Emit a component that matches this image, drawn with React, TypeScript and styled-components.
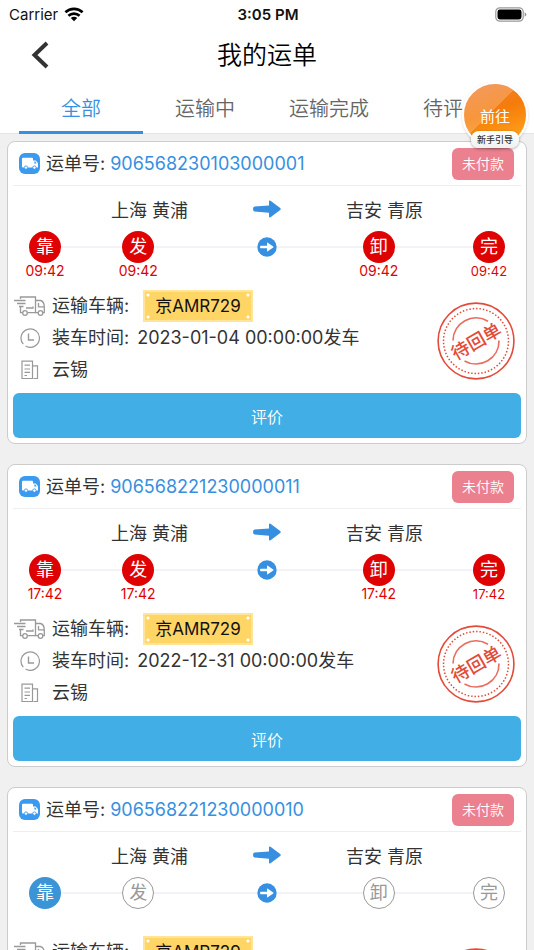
import React, { useState } from "react";
import styled, { createGlobalStyle, css } from "styled-components";

const GlobalStyle = createGlobalStyle`
  * { box-sizing: border-box; }
  body {
    margin: 0;
    background: #f0f0f0;
    color: #333;
    font-family: Inter, "Noto Sans CJK SC", sans-serif;
    font-size: 18px;
    font-weight: 400;
  }
  button { font: inherit; border: 0; margin: 0; padding: 0; background: none; cursor: pointer; }
  h1, h2, p, dl, dd, dt, ol { margin: 0; padding: 0; font-weight: inherit; }
  svg { display: block; flex: none; }
`;

const BLUE = "#368fe0";
const RED = "#df0202";

const Screen = styled.div`
  display: flex;
  flex-direction: column;
  height: 100vh;
  position: relative;
  overflow: hidden;
`;

const StatusBar = styled.div`
  display: grid;
  grid-template-columns: 1fr auto 1fr;
  align-items: center;
  height: 28px;
  padding: 0 7px 0 9px;
  background: #fff;
  color: #111;
  font-size: 15px;
`;

const Carrier = styled.span`
  display: flex;
  align-items: center;
  gap: 6px;
`;

const Clock = styled.span`
  font-weight: 600;
`;

const Battery = styled.span`
  justify-self: end;
`;

const TitleBar = styled.header`
  display: grid;
  grid-template-columns: 48px 1fr 48px;
  align-items: center;
  height: 54px;
  padding: 0 16px;
  background: #fff;
  color: #000;
`;

const BackButton = styled.button`
  display: flex;
  justify-content: center;
  align-items: center;
  height: 44px;
`;

const Title = styled.h1`
  font-size: 25px;
  font-weight: 350;
  line-height: 36px;
  text-align: center;
`;

const Tabs = styled.nav`
  display: flex;
  flex: none;
  height: 52px;
  padding-left: 19px;
  overflow: hidden;
  background: #fff;
  box-shadow: inset 0 -1px #e4e4e4;
`;

const Tab = styled.button<{ $active: boolean }>`
  flex: none;
  width: 124px;
  padding-top: 4px;
  border-bottom: 3px solid ${(p) => (p.$active ? BLUE : "transparent")};
  color: ${(p) => (p.$active ? BLUE : "#666")};
  font-size: 20px;
  font-weight: 350;
  line-height: 28px;
`;

const OrderList = styled.main`
  display: flex;
  flex: 1;
  flex-direction: column;
  gap: 20px;
  min-height: 0;
  padding: 7px;
  overflow-y: auto;
  scrollbar-width: none;
`;

const Card = styled.article`
  flex: none;
  padding: 0 5px 5px;
  border: 1px solid #ccc;
  border-radius: 8px;
  background: #fff;
`;

const CardHeader = styled.div`
  display: flex;
  align-items: center;
  height: 44px;
  padding: 0 7px 0 6px;
  border-bottom: 1px solid #eee;
`;

const OrderNumber = styled.h2`
  display: flex;
  flex: 1;
  gap: 5px;
  margin-left: 6px;
  font-size: 18px;
  line-height: 26px;
`;

const OrderLink = styled.a`
  color: ${BLUE};
  text-decoration: none;
`;

const PayBadge = styled.span`
  padding: 0 10px;
  border-radius: 6px;
  background: #eb808f;
  color: #fff;
  font-size: 14px;
  font-weight: 350;
  line-height: 32px;
`;

const Route = styled.div`
  display: grid;
  grid-template-columns: 1fr auto 1fr;
  align-items: center;
  height: 45px;
  padding: 0 33px;
  text-align: center;
`;

const Timeline = styled.div`
  display: flex;
  align-items: flex-start;
  height: 59px;
  padding: 0 16px;
`;

type StepState = "done" | "current" | "todo";

const Step = styled.div`
  display: flex;
  flex: none;
  flex-direction: column;
  align-items: center;
  width: 32px;
`;

const StepDot = styled.span<{ $state: StepState }>`
  display: flex;
  justify-content: center;
  align-items: center;
  width: 32px;
  height: 32px;
  border-radius: 50%;
  color: #fff;
  font-size: 18px;
  line-height: 26px;
  ${(p) => p.$state === "done" && css`background: ${RED};`}
  ${(p) => p.$state === "current" && css`background: #3b94d5;`}
  ${(p) => p.$state === "todo" && css`border: 1px solid #999; color: #999;`}
`;

const StepTime = styled.time<{ $small?: boolean }>`
  color: ${RED};
  font-size: ${(p) => (p.$small ? 13 : 14)}px;
  line-height: 16px;
`;

const Connector = styled.span<{ $grow: number }>`
  flex: ${(p) => p.$grow} 1 0;
  height: 2px;
  margin-top: 15px;
  background: #f3f3f7;
`;

const Midpoint = styled.span`
  flex: none;
  margin-top: 6px;
`;

const Details = styled.div`
  display: flex;
  align-items: flex-start;
  justify-content: space-between;
  padding-right: 6px;
`;

const InfoList = styled.dl`
  display: flex;
  flex-direction: column;
`;

const InfoRow = styled.div`
  display: flex;
  align-items: center;
  height: 32px;
`;

const InfoIcon = styled.dt`
  display: flex;
  justify-content: center;
  width: 33px;
  margin-right: 6px;
`;

const InfoText = styled.dd`
  display: flex;
  align-items: center;
  gap: 8px;
  line-height: 26px;
`;

const Plate = styled.span`
  margin-left: 6px;
  padding: 0 10px;
  border: 2px solid #ffe49a;
  background:
    radial-gradient(circle at 3px 3px, #fff 1px, transparent 2px),
    radial-gradient(circle at calc(100% - 3px) 3px, #fff 1px, transparent 2px),
    radial-gradient(circle at 3px calc(100% - 3px), #fff 1px, transparent 2px),
    radial-gradient(circle at calc(100% - 3px) calc(100% - 3px), #fff 1px, transparent 2px),
    #ffd666;
  color: #111;
  font-size: 17px;
  line-height: 28px;
`;

const StampSlot = styled.div`
  padding-top: 12px;
`;

const ReviewButton = styled.button`
  display: block;
  width: 100%;
  height: 45px;
  margin-top: 7px;
  border-radius: 6px;
  background: #41afe5;
  color: #fff;
  font-size: 16px;
  font-weight: 350;
`;

const GuideButton = styled.button`
  position: absolute;
  top: 82px;
  right: 6px;
  display: flex;
  flex-direction: column;
  align-items: center;
  width: 66px;
  height: 66px;
`;

const GuideDisc = styled.span`
  width: 66px;
  height: 66px;
  flex: none;
  border: 2px solid #fff;
  border-radius: 50%;
  background:
    linear-gradient(135deg, rgba(255, 255, 255, 0.2) 45%, transparent 45%),
    linear-gradient(160deg, #f08030 10%, #f57c0a 45%, #ffa41c 90%);
  box-shadow: 0 1px 3px rgba(0, 0, 0, 0.15);
  color: #fff;
  font-size: 15px;
  line-height: 65px;
`;

const GuideLabel = styled.span`
  flex: none;
  margin-top: -17px;
  padding: 0 6px;
  border-radius: 8px;
  background: linear-gradient(#fff, #f0f0f0);
  box-shadow: 0 1px 3px rgba(0, 0, 0, 0.35);
  color: #333;
  font-size: 9px;
  font-weight: 500;
  line-height: 17px;
  white-space: nowrap;
  z-index: 1;
`;

const WifiIcon = () => (
  <svg width="20" height="15" viewBox="0 0 20 15" fill="none" stroke="#000" strokeWidth="2.6">
    <path d="M1.4 5.3a12.4 12.4 0 0 1 17.2 0M4.4 8.8a8.2 8.2 0 0 1 11.2 0" />
    <path d="M10 14.2 6.8 11a4.6 4.6 0 0 1 6.4 0Z" fill="#000" stroke="none" />
  </svg>
);

const BatteryIcon = () => (
  <svg width="32" height="15" viewBox="0 0 32 15">
    <rect x="0.8" y="0.8" width="27.4" height="13.4" rx="4" fill="none" stroke="#999" strokeWidth="1.2" />
    <rect x="2.5" y="2.5" width="24" height="10" rx="2.4" fill="#000" />
    <path d="M29.6 5.2q1.8.7 1.8 2.3t-1.8 2.3Z" fill="#999" />
  </svg>
);

const BackIcon = () => (
  <svg width="18" height="28" viewBox="0 0 18 28" fill="none" stroke="#333" strokeWidth="4">
    <path d="M16 2 3.5 14 16 26" />
  </svg>
);

const TruckBadge = () => (
  <svg width="21" height="21" viewBox="0 0 21 21">
    <rect width="21" height="21" rx="6" fill="#3a9af0" />
    <rect x="3" y="4.8" width="11" height="9.8" rx="1" fill="#fff" />
    <path d="M13.8 7.400h3L19 10.200V14.600h-5.200Z" fill="#fff" />
    <path d="M15.400 8.600h1l1.200 1.900h-2.200Z" fill="#3a9af0" />
    <circle cx="7" cy="14.6" r="1.7" fill="#fff" stroke="#3a9af0" strokeWidth="0.900" />
    <circle cx="15.4" cy="14.6" r="1.7" fill="#fff" stroke="#3a9af0" strokeWidth="0.900" />
  </svg>
);

const RouteArrow = () => (
  <svg width="28" height="18" viewBox="0 0 28 18" fill={BLUE}>
    <path d="M1.500 6.600 16 5.500V1.500Q16 0 17.500.700L27.200 8Q28.300 9 27.200 10L17.500 17.300Q16 18 16 16.500V12.700L1.500 11.600Q0 11.400 0 9.100T1.500 6.600Z" />
  </svg>
);

const CircleArrow = () => (
  <svg width="20" height="20" viewBox="0 0 20 20">
    <circle cx="10" cy="10" r="9.7" fill={BLUE} />
    <path d="M3.800 8.700H10V6.200q0-1 .8-.5l5.400 3.700q.8.600 0 1.200l-5.400 3.700q-.8.500-.8-.5v-2.500H3.800q-.7 0-.7-.7V9.400q0-.7.7-.7Z" fill="#fff" />
  </svg>
);

const TruckIcon = () => (
  <svg width="32" height="20" viewBox="0 0 32 20" fill="none" stroke="#999" strokeWidth="1.300">
    <path d="M6.500 3V1H21.500V16.700H13.500M6.500 11V16.700H8.500M0 4.500H11.500M3 7.500H11.500M5 10.500H9.500" />
    <path d="M21.500 4.500H26.500Q30.300 5.500 30.300 11V16.700H29M24 16.700H21.500M24.500 7V10.800H30M19 10.500V12H12" />
    <circle cx="11" cy="17" r="2.300" />
    <circle cx="26.500" cy="17" r="2.300" />
  </svg>
);

const ClockIcon = () => (
  <svg width="20" height="20" viewBox="0 0 20 20" fill="none" stroke="#999" strokeWidth="1.200">
    <path d="M3.300 16.200A9.200 9.200 0 1 1 5.600 18.100" />
    <path d="M8.500 5.500V12H14" strokeWidth="1.400" />
  </svg>
);

const CompanyIcon = () => (
  <svg width="18" height="20" viewBox="0 0 18 20" fill="none" stroke="#999" strokeWidth="1.200">
    <path d="M1 1.200H11.500V18.500H1ZM11.500 5.800H16.500V18.500H12.500M3.500 5.200H9M3.500 9H9M3.500 12.300H9M3.500 15.500H6" />
  </svg>
);

const StampText = styled.text`
  font-family: "Noto Sans CJK SC", sans-serif;
  font-size: 18px;
  font-weight: 500;
  fill: #e34a38;
  text-anchor: middle;
`;

const Stamp = () => (
  <svg width="78" height="78" viewBox="0 0 78 78" fill="none" stroke="#e34a38" role="img" aria-label="待回单">
    <circle cx="39" cy="39" r="37.900" strokeWidth="1.600" />
    <circle cx="39" cy="39" r="32.500" strokeWidth="1.500" strokeDasharray="1.500 1.900" />
    <path d="M16 38.500A23 23 0 0 1 51 19.300M62 38.500A23 23 0 0 1 27.500 58.900" strokeWidth="1.700" opacity="0.8" />
    <StampText x="39" y="46" stroke="none" transform="rotate(-30 39 39)">待回单</StampText>
  </svg>
);

interface Order {
  number: string;
  time?: string;
  departure: string;
}

const ORDERS: Order[] = [
  { number: "906568230103000001", time: "09:42", departure: "2023-01-04 00:00:00发车" },
  { number: "906568221230000011", time: "17:42", departure: "2022-12-31 00:00:00发车" },
  { number: "906568221230000010", departure: "2022-12-31 00:00:00发车" },
];

const TABS = ["全部", "运输中", "运输完成", "待评价"];

interface TimelineStepProps {
  label: string;
  state: StepState;
  time?: string;
  small?: boolean;
}

function TimelineStep({ label, state, time, small }: TimelineStepProps) {
  return (
    <Step>
      <StepDot $state={state}>{label}</StepDot>
      {time && <StepTime $small={small}>{time}</StepTime>}
    </Step>
  );
}

function OrderCard({ order }: { order: Order }) {
  const rest: StepState = order.time ? "done" : "todo";
  return (
    <Card>
      <CardHeader>
        <TruckBadge />
        <OrderNumber>
          <span>运单号:</span>
          <OrderLink href={"#" + order.number}>{order.number}</OrderLink>
        </OrderNumber>
        <PayBadge>未付款</PayBadge>
      </CardHeader>
      <Route>
        <span>上海 黄浦</span>
        <RouteArrow />
        <span>吉安 青原</span>
      </Route>
      <Timeline>
        <TimelineStep label="靠" state={order.time ? "done" : "current"} time={order.time} />
        <Connector $grow={61} />
        <TimelineStep label="发" state={rest} time={order.time} />
        <Connector $grow={102} />
        <Midpoint><CircleArrow /></Midpoint>
        <Connector $grow={86} />
        <TimelineStep label="卸" state={rest} time={order.time} />
        <Connector $grow={78} />
        <TimelineStep label="完" state={rest} time={order.time} small />
      </Timeline>
      <Details>
        <InfoList>
          <InfoRow>
            <InfoIcon><TruckIcon /></InfoIcon>
            <InfoText><span>运输车辆:</span><Plate>京AMR729</Plate></InfoText>
          </InfoRow>
          <InfoRow>
            <InfoIcon><ClockIcon /></InfoIcon>
            <InfoText><span>装车时间:</span><span>{order.departure}</span></InfoText>
          </InfoRow>
          <InfoRow>
            <InfoIcon><CompanyIcon /></InfoIcon>
            <InfoText>云锡</InfoText>
          </InfoRow>
        </InfoList>
        <StampSlot><Stamp /></StampSlot>
      </Details>
      <ReviewButton type="button">评价</ReviewButton>
    </Card>
  );
}

export default function App() {
  const [active, setActive] = useState(0);
  return (
    <Screen>
      <GlobalStyle />
      <StatusBar>
        <Carrier>Carrier<WifiIcon /></Carrier>
        <Clock>3:05 PM</Clock>
        <Battery><BatteryIcon /></Battery>
      </StatusBar>
      <TitleBar>
        <BackButton type="button" aria-label="返回"><BackIcon /></BackButton>
        <Title>我的运单</Title>
      </TitleBar>
      <Tabs>
        {TABS.map((tab, i) => (
          <Tab key={tab} type="button" $active={i === active} onClick={() => setActive(i)}>{tab}</Tab>
        ))}
      </Tabs>
      <OrderList>
        {ORDERS.map((order) => <OrderCard key={order.number} order={order} />)}
      </OrderList>
      <GuideButton type="button">
        <GuideDisc>前往</GuideDisc>
        <GuideLabel>新手引导</GuideLabel>
      </GuideButton>
    </Screen>
  );
}
